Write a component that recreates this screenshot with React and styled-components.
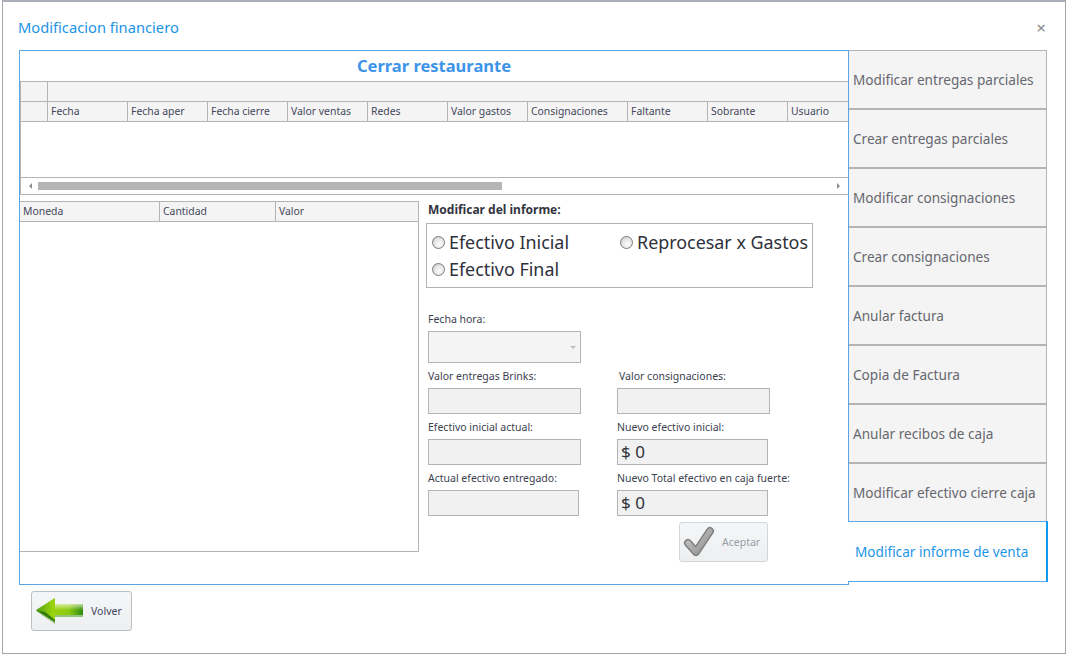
import React from 'react';
import styled, { createGlobalStyle } from 'styled-components';

const BLUE_LINE = '#5aa5e6';
const GREY_LINE = '#b4b4b4';
const CELL_BG = '#f4f4f4';
const FONT = '"Noto Sans", "DejaVu Sans", sans-serif';

const GlobalStyle = createGlobalStyle`
  html, body {
    margin: 0;
    background: #fff;
  }
  body {
    font-family: ${FONT};
    color: #3f4250;
  }
  * {
    box-sizing: border-box;
  }
`;

const Window = styled.div`
  width: 1064px;
  height: 654px;
  margin-left: 2px;
  border: 1px solid #a3a5a8;
  border-top: 2px solid #a9adb5;
  display: flex;
  flex-direction: column;
`;

const TitleBar = styled.div`
  height: 48px;
  flex: none;
  display: flex;
  align-items: center;
  justify-content: space-between;
  padding: 4px 19px 2px 15px;
`;

const Title = styled.div`
  font-size: 14.7px;
  color: #1b94e6;
`;

const Close = styled.div`
  font-size: 17px;
  line-height: 1;
  color: #8a8a8a;
`;

const Content = styled.div`
  display: flex;
  margin-left: 16px;
`;

const Panel = styled.div`
  width: 830px;
  height: 535px;
  flex: none;
  border: 1px solid ${BLUE_LINE};
`;

const PanelTitle = styled.div`
  height: 30px;
  padding-bottom: 2px;
  display: flex;
  align-items: center;
  justify-content: center;
  font-size: 16.5px;
  font-weight: 700;
  color: #3d94e8;
`;

const Grid = styled.div`
  border: 1px solid ${GREY_LINE};
  border-right: 0;
  height: 114px;
  display: flex;
  flex-direction: column;
`;

const BandRow = styled.div`
  display: flex;
  height: 20px;
  flex: none;
  background: ${CELL_BG};
  border-bottom: 1px solid ${GREY_LINE};
`;

const HeadRow = styled(BandRow)`
  overflow: hidden;
`;

const Indicator = styled.div`
  width: 27px;
  flex: none;
  border-right: 1px solid ${GREY_LINE};
`;

const Cell = styled.div`
  width: ${(p) => p.$w}px;
  flex: none;
  padding-left: ${(p) => p.$pad || 3}px;
  border-right: 1px solid ${(p) => (p.$last ? 'transparent' : GREY_LINE)};
  font-size: 10.4px;
  line-height: 18px;
  white-space: nowrap;
  overflow: hidden;
  color: #44475a;
`;

const GridBody = styled.div`
  flex: 1;
`;

const ScrollBar = styled.div`
  height: 17px;
  flex: none;
  display: flex;
  align-items: center;
  gap: 6px;
  padding: 0 8px 0 8px;
  border-top: 1px solid ${GREY_LINE};
`;

const ArrowLeft = styled.span`
  width: 0;
  height: 0;
  border: 3px solid transparent;
  border-left: 0;
  border-right: 3px solid #8d8d8d;
`;

const ArrowRight = styled.span`
  width: 0;
  height: 0;
  border: 3px solid transparent;
  border-right: 0;
  border-left: 3px solid #8d8d8d;
`;

const ScrollTrack = styled.div`
  flex: 1;
`;

const ScrollThumb = styled.div`
  width: 464px;
  height: 8px;
  background: #b5b5b5;
`;

const Lower = styled.div`
  display: flex;
  margin-top: 6px;
`;

const MoneyGrid = styled.div`
  width: 399px;
  height: 351px;
  flex: none;
  border: 1px solid ${GREY_LINE};
  border-left: 0;
`;

const FormColumn = styled.div`
  flex: 1;
  padding-left: 7px;
`;

const SectionLabel = styled.div`
  height: 22px;
  padding-left: 2px;
  font-size: 12px;
  font-weight: 700;
  line-height: 18px;
  color: #33353f;
`;

const RadioBox = styled.div`
  width: 387px;
  height: 65px;
  border: 1px solid ${GREY_LINE};
  display: grid;
  grid-template-columns: 188px 1fr;
  grid-auto-rows: 27px;
  align-content: center;
  padding-left: 5px;
`;

const RadioItem = styled.label`
  display: flex;
  align-items: center;
  gap: 4px;
  font-size: 17.9px;
  white-space: nowrap;
  color: #2e303a;
`;

const RadioDot = styled.span`
  width: 13px;
  height: 13px;
  flex: none;
  border-radius: 50%;
  border: 1px solid #7b7b7b;
  background: radial-gradient(circle at 60% 65%, #fdfdfd 0%, #e4e4e4 55%, #bdbdbd 100%);
`;

const Fields = styled.div`
  display: grid;
  grid-template-columns: 189px 1fr;
  margin-top: 18px;
  padding-left: 2px;
`;

const Field = styled.div`
  height: 51px;
`;

const FechaField = styled(Field)`
  height: 57px;
  grid-column: 1 / span 2;
`;

const FieldLabel = styled.div`
  height: 25px;
  padding: 1px 0 0 ${(p) => p.$indent || 0}px;
  font-size: 10.5px;
  line-height: 25px;
  white-space: nowrap;
  color: #3c3f50;
`;

const Input = styled.div`
  width: ${(p) => p.$w || 153}px;
  height: 26px;
  padding-left: 3px;
  background: #f1f1f1;
  border: 1px solid ${GREY_LINE};
  font-size: 17px;
  line-height: 24px;
  color: #30323a;
`;

const Combo = styled.div`
  width: 153px;
  height: 32px;
  display: flex;
  align-items: center;
  justify-content: flex-end;
  padding-right: 4px;
  background: #f4f4f4;
  border: 1px solid ${GREY_LINE};
`;

const ComboCaret = styled.span`
  width: 0;
  height: 0;
  border: 3px solid transparent;
  border-bottom: 0;
  border-top: 3px solid #bdbdbd;
`;

const ActionRow = styled.div`
  display: flex;
  margin-top: 6px;
  margin-left: 253px;
`;

const ImageButton = styled.div`
  width: ${(p) => p.$w}px;
  height: 40px;
  flex: none;
  display: flex;
  align-items: center;
  gap: ${(p) => p.$gap}px;
  padding-left: ${(p) => p.$pad}px;
  border: 1px solid ${(p) => (p.$off ? '#d2d6d9' : '#bcbec0')};
  border-radius: 3px;
  background: linear-gradient(#f5f6f8, #edeff1);
  font-size: 10.5px;
  color: ${(p) => (p.$off ? '#9a9da6' : '#40435a')};
`;

const Tabs = styled.div`
  width: 198px;
  flex: none;
`;

const Tab = styled.div`
  height: 59px;
  display: flex;
  align-items: center;
  padding-left: 4px;
  background: ${CELL_BG};
  border: 1px solid ${GREY_LINE};
  border-left: 0;
  font-size: 13.6px;
  white-space: nowrap;
  color: #66676f;
`;

const ActiveTab = styled(Tab)`
  position: relative;
  width: 200px;
  height: 61px;
  margin: -1px 0 0 -1px;
  padding-left: 7px;
  background: #fff;
  border-top: 1px solid ${BLUE_LINE};
  border-bottom: 1px solid ${BLUE_LINE};
  border-right: 2px solid #0d9bf2;
  color: #1e96e6;
`;

const Footer = styled.div`
  margin: 6px 0 0 28px;
`;

const BackArrow = () => (
  <svg width="50" height="28" viewBox="0 0 50 28">
    <defs>
      <linearGradient id="arrowFill" x1="0" y1="0" x2="1" y2="0">
        <stop offset="0" stopColor="#4f9f10" />
        <stop offset="0.35" stopColor="#9ad20e" />
        <stop offset="0.7" stopColor="#8cc912" />
        <stop offset="1" stopColor="#2f8a12" />
      </linearGradient>
      <linearGradient id="arrowShine" x1="0" y1="0" x2="0" y2="1">
        <stop offset="0" stopColor="#eef7cf" stopOpacity="0.75" />
        <stop offset="1" stopColor="#eef7cf" stopOpacity="0" />
      </linearGradient>
    </defs>
    <path d="M1 14 L20 1 L20 7 L48 7 L48 20 L20 20 L20 27 Z" fill="#4f9a1c" opacity="0.55" />
    <path d="M1 13 L20 1 L20 7 L48 7 L48 18 L20 18 L20 25 Z" fill="url(#arrowFill)" />
    <path d="M1 13 L10 15 L20 23 L20 25 Z" fill="#2f7a0c" />
    <path d="M20 7 L48 7 L48 13 L20 13 Z" fill="url(#arrowShine)" />
  </svg>
);

const CheckMark = () => (
  <svg width="32" height="32" viewBox="0 0 32 32">
    <defs>
      <linearGradient id="checkFill" x1="0" y1="0" x2="1" y2="1">
        <stop offset="0" stopColor="#c9c9c9" />
        <stop offset="1" stopColor="#8f8f8f" />
      </linearGradient>
    </defs>
    <path d="M5 17 L13 26 L27 5" fill="none" stroke="#7f7f7f" strokeWidth="8" strokeLinecap="round" strokeLinejoin="round" />
    <path d="M5 17 L13 26 L27 5" fill="none" stroke="url(#checkFill)" strokeWidth="5" strokeLinecap="round" strokeLinejoin="round" />
  </svg>
);

const mainColumns = [
  ['Fecha', 80],
  ['Fecha aper', 80],
  ['Fecha cierre', 80],
  ['Valor ventas', 80],
  ['Redes', 80],
  ['Valor gastos', 80],
  ['Consignaciones', 100],
  ['Faltante', 80],
  ['Sobrante', 80],
  ['Usuario', 60],
];

const moneyColumns = [
  ['Moneda', 140],
  ['Cantidad', 116],
  ['Valor', 142],
];

const tabNames = [
  'Modificar entregas parciales',
  'Crear entregas parciales',
  'Modificar consignaciones',
  'Crear consignaciones',
  'Anular factura',
  'Copia de Factura',
  'Anular recibos de caja',
  'Modificar efectivo cierre caja',
];

export default function App() {
  return (
    <>
      <GlobalStyle />
      <Window>
        <TitleBar>
          <Title>Modificacion financiero</Title>
          <Close>×</Close>
        </TitleBar>
        <Content>
          <Panel>
            <PanelTitle>Cerrar restaurante</PanelTitle>
            <Grid>
              <BandRow>
                <Indicator />
              </BandRow>
              <HeadRow>
                <Indicator />
                {mainColumns.map(([name, w], i) => (
                  <Cell key={name} $w={w} $last={i === mainColumns.length - 1}>
                    {name}
                  </Cell>
                ))}
              </HeadRow>
              <GridBody />
              <ScrollBar>
                <ArrowLeft />
                <ScrollTrack>
                  <ScrollThumb />
                </ScrollTrack>
                <ArrowRight />
              </ScrollBar>
            </Grid>
            <Lower>
              <MoneyGrid>
                <BandRow>
                  {moneyColumns.map(([name, w], i) => (
                    <Cell key={name} $w={w} $last={i === moneyColumns.length - 1}>
                      {name}
                    </Cell>
                  ))}
                </BandRow>
              </MoneyGrid>
              <FormColumn>
                <SectionLabel>Modificar del informe:</SectionLabel>
                <RadioBox>
                  <RadioItem>
                    <RadioDot />
                    Efectivo Inicial
                  </RadioItem>
                  <RadioItem>
                    <RadioDot />
                    Reprocesar x Gastos
                  </RadioItem>
                  <RadioItem>
                    <RadioDot />
                    Efectivo Final
                  </RadioItem>
                </RadioBox>
                <Fields>
                  <FechaField>
                    <FieldLabel>Fecha hora:</FieldLabel>
                    <Combo>
                      <ComboCaret />
                    </Combo>
                  </FechaField>
                  <Field>
                    <FieldLabel>Valor entregas Brinks:</FieldLabel>
                    <Input />
                  </Field>
                  <Field>
                    <FieldLabel $indent={2}>Valor consignaciones:</FieldLabel>
                    <Input />
                  </Field>
                  <Field>
                    <FieldLabel>Efectivo inicial actual:</FieldLabel>
                    <Input />
                  </Field>
                  <Field>
                    <FieldLabel>Nuevo efectivo inicial:</FieldLabel>
                    <Input $w={151}>$ 0</Input>
                  </Field>
                  <Field>
                    <FieldLabel>Actual efectivo entregado:</FieldLabel>
                    <Input $w={151} />
                  </Field>
                  <Field>
                    <FieldLabel>Nuevo Total efectivo en caja fuerte:</FieldLabel>
                    <Input $w={151}>$ 0</Input>
                  </Field>
                </Fields>
                <ActionRow>
                  <ImageButton $w={89} $gap={7} $pad={3} $off>
                    <CheckMark />
                    Aceptar
                  </ImageButton>
                </ActionRow>
              </FormColumn>
            </Lower>
          </Panel>
          <Tabs>
            {tabNames.map((name) => (
              <Tab key={name}>{name}</Tab>
            ))}
            <ActiveTab>Modificar informe de venta</ActiveTab>
          </Tabs>
        </Content>
        <Footer>
          <ImageButton $w={101} $gap={6} $pad={3}>
            <BackArrow />
            Volver
          </ImageButton>
        </Footer>
      </Window>
    </>
  );
}
